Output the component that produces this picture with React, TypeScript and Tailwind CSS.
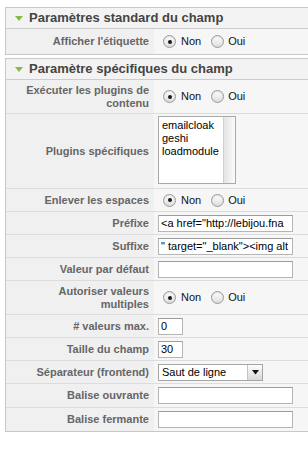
import type { ReactNode } from "react";

const font = "font-['Liberation_Sans',Arial,sans-serif]";

function Radio({ checked }: { checked?: boolean }) {
  return (
    <span className="flex h-[13px] w-[13px] shrink-0 items-center justify-center rounded-full border border-[#9a9a9a] bg-linear-to-b from-[#ffffff] to-[#dcdcdc] shadow-[inset_0_1px_1px_rgba(0,0,0,0.12)]">
      {checked && <span className="h-[4px] w-[4px] rounded-full bg-[#1a1a1a]" />}
    </span>
  );
}

function NonOui() {
  return (
    <div className="flex items-center text-[11px] text-[#111]">
      <span className="ml-[5px]">
        <Radio checked />
      </span>
      <span className="ml-[5px]">Non</span>
      <span className="ml-[10px]">
        <Radio />
      </span>
      <span className="ml-[4px]">Oui</span>
    </div>
  );
}

function TextBox({ value = "", w = "w-[135px]" }: { value?: string; w?: string }) {
  return (
    <div
      className={`${w} h-[17px] overflow-hidden whitespace-nowrap border border-[#b5b5b5] border-t-[#9c9c9c] bg-white px-[2px] text-[11px] leading-[15px] text-black`}
    >
      {value}
    </div>
  );
}

function Row({
  label,
  children,
  h = "h-[23px]",
  last,
}: {
  label: ReactNode;
  children: ReactNode;
  h?: string;
  last?: boolean;
}) {
  return (
    <div className={`flex ${h} ${last ? "" : "border-b border-[#dcdcdc]"}`}>
      <div className="flex w-[148px] shrink-0 items-center justify-end bg-[#f0f0f0] pr-[5px] text-right text-[11px] font-bold leading-[13px] text-[#666]">
        <span>{label}</span>
      </div>
      <div className="flex flex-1 items-center bg-[#f6f6f6] pl-[4px]">{children}</div>
    </div>
  );
}

function Header({ title }: { title: string }) {
  return (
    <div className="flex h-[21px] items-center border-b border-[#cccccc] bg-[#f3f3f3] pl-[9px] text-[13px] font-bold text-[#444]">
      <svg width="8" height="6" viewBox="0 0 8 6" className="mr-[6px] mt-[1px]">
        <path d="M0 0 L8 0 L4 5 Z" fill="#86bb4a" />
      </svg>
      {title}
    </div>
  );
}

export default function App() {
  return (
    <div className={`${font} h-[449px] w-[308px] overflow-hidden bg-white`}>
      <div className="ml-[5px] mt-[7px] w-[310px] border border-[#c8c8c8]">
        <Header title="Paramètres standard du champ" />
        <Row label="Afficher l'étiquette" h="h-[25px]" last>
          <NonOui />
        </Row>
      </div>

      <div className="ml-[5px] mt-[3px] w-[310px] border border-[#c8c8c8]">
        <Header title="Paramètre spécifiques du champ" />
        <Row
          label={
            <>
              Exécuter les plugins de
              <br />
              contenu
            </>
          }
          h="h-[34px]"
        >
          <NonOui />
        </Row>
        <Row label="Plugins spécifiques" h="h-[75px]">
          <div className="mb-[3px] flex h-[68px] w-[78px] border border-[#a9a9a9] bg-white">
            <div className="flex-1 pl-[3px] pt-[2px] text-[11px] leading-[13px] text-black">
              <div>emailcloak</div>
              <div>geshi</div>
              <div>loadmodule</div>
            </div>
            <div className="w-[12px] border-l border-[#cfcfcf] bg-linear-to-r from-[#e4e4e4] to-[#fbfbfb]" />
          </div>
        </Row>
        <Row label="Enlever les espaces">
          <NonOui />
        </Row>
        <Row label="Préfixe">
          <TextBox value={'<a href="http://lebijou.fna'} />
        </Row>
        <Row label="Suffixe">
          <TextBox value={'" target="_blank"><img alt'} />
        </Row>
        <Row label="Valeur par défaut">
          <TextBox />
        </Row>
        <Row
          label={
            <>
              Autoriser valeurs
              <br />
              multiples
            </>
          }
          h="h-[34px]"
        >
          <NonOui />
        </Row>
        <Row label="# valeurs max.">
          <TextBox value="0" w="w-[25px]" />
        </Row>
        <Row label="Taille du champ">
          <TextBox value="30" w="w-[25px]" />
        </Row>
        <Row label="Séparateur (frontend)">
          <div className="flex h-[17px] w-[105px] border border-[#a5a5a5] bg-white">
            <div className="flex-1 pl-[3px] text-[11px] leading-[15px] text-black">Saut de ligne</div>
            <div className="flex w-[15px] items-center justify-center border-l border-[#c4c4c4] bg-linear-to-b from-[#fdfdfd] to-[#d8d8d8]">
              <svg width="7" height="5" viewBox="0 0 7 5">
                <path d="M0 0 L7 0 L3.5 4.5 Z" fill="#111" />
              </svg>
            </div>
          </div>
        </Row>
        <Row label="Balise ouvrante" h="h-[24px]">
          <TextBox />
        </Row>
        <Row label="Balise fermante" last>
          <TextBox />
        </Row>
      </div>
    </div>
  );
}
